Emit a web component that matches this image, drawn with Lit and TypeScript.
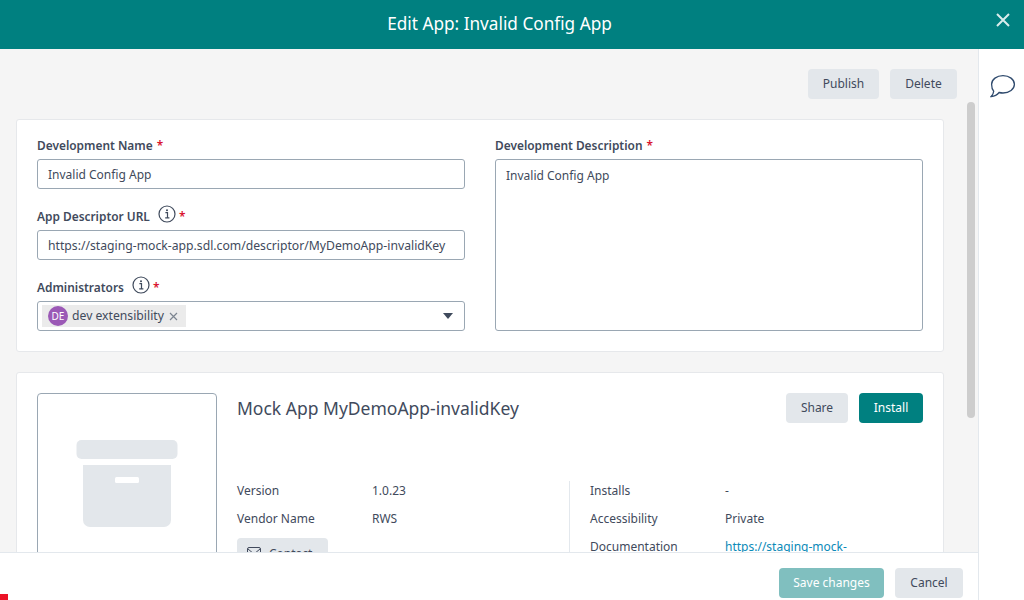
import { css, html, LitElement } from "lit";
import { customElement } from "lit/decorators.js";

const infoIcon = html`<svg class="info" viewBox="0 0 18 18" width="18" height="18">
  <circle cx="9" cy="9" r="8" fill="none" stroke="#3f4a5c" stroke-width="1.2"></circle>
  <path d="M7.4 7.6h2.1v5M7.2 12.9h4.2" fill="none" stroke="#3f4a5c" stroke-width="1.2"></path>
  <circle cx="9" cy="5.2" r="1" fill="#3f4a5c"></circle>
</svg>`;

@customElement("app-root")
export class AppRoot extends LitElement {
  static styles = css`
    :host {
      display: flex;
      flex-direction: column;
      position: relative;
      width: 1024px;
      height: 600px;
      overflow: hidden;
      background: #fff;
      color: #414a5c;
      font-family: "Noto Sans", sans-serif;
      font-size: 12px;
    }

    * {
      box-sizing: border-box;
    }

    header {
      height: 49px;
      flex: none;
      background: #008080;
      color: #fff;
      display: flex;
      align-items: center;
      justify-content: center;
      position: relative;
      font-size: 17.2px;
      padding: 0 25px 2px 0;
    }

    .close {
      position: absolute;
      right: 13px;
      top: 12px;
    }

    .body {
      flex: 1;
      min-height: 0;
      display: flex;
    }

    .main {
      width: 979px;
      flex: none;
      display: flex;
      flex-direction: column;
      border-right: 1px solid #e3e8ed;
    }

    .rail {
      flex: 1;
      padding: 25px 0 0 11px;
    }

    .scroll {
      flex: 1;
      min-height: 0;
      overflow: hidden;
      background: #f5f5f5;
      padding: 20px 21px 0 16px;
      position: relative;
    }

    .thumb {
      position: absolute;
      left: 967px;
      top: 53px;
      width: 8px;
      height: 316px;
      border-radius: 4px;
      background: #cdcdcd;
    }

    .top-actions {
      display: flex;
      justify-content: flex-end;
      gap: 11px;
      margin-bottom: 20px;
    }

    button {
      height: 30px;
      padding: 0 0 2px;
      border: none;
      border-radius: 4px;
      font: inherit;
      background: #e3e7eb;
      color: inherit;
    }

    .w62 {
      width: 62px;
    }

    .w64 {
      width: 64px;
    }

    .w67 {
      width: 67px;
    }

    .w68 {
      width: 68px;
    }

    .w71 {
      width: 71px;
    }

    .w105 {
      width: 105px;
    }

    button.primary {
      background: #008080;
      color: #fff;
    }

    button.disabled {
      background: #80bfbf;
      color: #fff;
    }

    .card {
      width: 928px;
      background: #fff;
      border: 1px solid #e6e8eb;
      border-radius: 3px;
      padding: 20px;
    }

    .form {
      height: 233px;
      margin-bottom: 20px;
      padding-top: 15px;
      display: grid;
      grid-template-columns: 428px 428px;
      column-gap: 30px;
    }

    .left {
      display: flex;
      flex-direction: column;
      gap: 17px;
    }

    .right {
      display: flex;
      flex-direction: column;
    }

    .field {
      display: flex;
      flex-direction: column;
    }

    label {
      height: 19px;
      display: flex;
      align-items: center;
      font-size: 11.9px;
      font-weight: 600;
      margin-bottom: 5px;
    }

    .info {
      margin: -3px 3px 0 8px;
    }

    .req {
      color: #d9142f;
      margin-left: 4px;
    }

    .info + .req {
      margin-left: 0;
    }

    .input {
      height: 30px;
      border: 1px solid #9aa7b3;
      border-radius: 3px;
      padding: 0 10px;
      display: flex;
      align-items: center;
      background: #fff;
    }

    .url {
      font-size: 12.2px;
    }

    .area {
      height: 172px;
      align-items: flex-start;
      padding-top: 7px;
    }

    .select {
      padding: 0 11px 0 4px;
      justify-content: space-between;
    }

    .chip {
      width: 144px;
      height: 22px;
      display: flex;
      align-items: center;
      background: #ebebeb;
      padding: 0 8px 0 6px;
      gap: 4px;
      font-size: 12.2px;
    }

    .chip-label {
      margin-top: -2px;
    }

    .avatar {
      width: 20px;
      height: 20px;
      border-radius: 50%;
      background: #9b59b6;
      color: #fff;
      font-size: 10px;
      display: flex;
      align-items: center;
      justify-content: center;
    }

    .chip-x {
      margin-left: auto;
    }

    .caret {
      width: 0;
      height: 0;
      border-left: 5px solid transparent;
      border-right: 5px solid transparent;
      border-top: 6px solid #3f4a5c;
    }

    .app {
      display: flex;
      gap: 20px;
      height: 300px;
    }

    .logo {
      width: 180px;
      height: 220px;
      flex: none;
      border: 1px solid #9aa7b3;
      border-radius: 4px;
      display: flex;
      justify-content: center;
      padding-top: 46px;
    }

    .info-col {
      flex: 1;
      display: flex;
      flex-direction: column;
    }

    .title-row {
      height: 79px;
      display: flex;
      justify-content: space-between;
    }

    h2 {
      margin: 3px 0 0;
      font-size: 17.5px;
      font-weight: 400;
    }

    .share {
      display: flex;
      gap: 11px;
    }

    .details {
      display: grid;
      grid-template-columns: 332px 1fr;
      margin-top: 4px;
    }

    .col {
      display: flex;
      flex-direction: column;
    }

    .col + .col {
      margin-top: 5px;
      border-left: 1px solid #e3e8ed;
      padding-left: 20px;
    }

    .col + .col .row:first-child {
      margin-top: -5px;
    }

    .row {
      height: 28px;
      display: flex;
      align-items: center;
    }

    .row span:first-child {
      width: 135px;
    }

    a {
      color: #0a8ab8;
    }

    .contact {
      width: 91px;
      padding: 0 10px;
      margin-top: 6px;
      display: flex;
      align-items: center;
      gap: 8px;
    }

    footer {
      height: 48px;
      flex: none;
      background: #fff;
      border-top: 1px solid #e3e8ed;
      display: flex;
      justify-content: flex-end;
      align-items: flex-end;
      gap: 11px;
      padding: 0 15px 2px 0;
      position: relative;
    }

    .mark {
      position: absolute;
      left: 0;
      bottom: 0;
      width: 8px;
      height: 6px;
      background: #ec1226;
    }
  `;

  render() {
    return html`
      <header>
        Edit App: Invalid Config App
        <svg class="close" width="16" height="16" viewBox="0 0 16 16">
          <path d="M2 2l12 12M14 2L2 14" stroke="#d9ecec" stroke-width="2" fill="none"></path>
        </svg>
      </header>
      <div class="body">
        <div class="main">
          <div class="scroll">
            <div class="top-actions">
              <button class="w71">Publish</button>
              <button class="w67">Delete</button>
            </div>
            <div class="card form">
              <div class="left">
                <div class="field">
                  <label>Development Name <span class="req">*</span></label>
                  <div class="input">Invalid Config App</div>
                </div>
                <div class="field">
                  <label>App Descriptor URL ${infoIcon}<span class="req">*</span></label>
                  <div class="input url">https://staging-mock-app.sdl.com/descriptor/MyDemoApp-invalidKey</div>
                </div>
                <div class="field">
                  <label>Administrators ${infoIcon}<span class="req">*</span></label>
                  <div class="input select">
                    <div class="chip">
                      <span class="avatar">DE</span>
                      <span class="chip-label">dev extensibility</span>
                      <svg class="chip-x" width="9" height="9" viewBox="0 0 9 9">
                        <path d="M1 1l7 7M8 1L1 8" stroke="#7c8590" stroke-width="1.2" fill="none"></path>
                      </svg>
                    </div>
                    <span class="caret"></span>
                  </div>
                </div>
              </div>
              <div class="right">
                <label>Development Description <span class="req">*</span></label>
                <div class="input area">Invalid Config App</div>
              </div>
            </div>
            <div class="card app">
              <div class="logo">
                <svg width="102" height="88" viewBox="0 0 102 88">
                  <rect x="0.5" y="0" width="101" height="19" rx="5" fill="#e3e7eb"></rect>
                  <path d="M7 25h88v55a7 7 0 0 1-7 7H14a7 7 0 0 1-7-7z" fill="#e3e7eb"></path>
                  <rect x="39" y="37" width="24" height="6" rx="1.5" fill="#fff"></rect>
                </svg>
              </div>
              <div class="info-col">
                <div class="title-row">
                  <h2>Mock App MyDemoApp-invalidKey</h2>
                  <div class="share">
                    <button class="w62">Share</button>
                    <button class="primary w64">Install</button>
                  </div>
                </div>
                <div class="details">
                  <div class="col">
                    <div class="row"><span>Version</span><span>1.0.23</span></div>
                    <div class="row"><span>Vendor Name</span><span>RWS</span></div>
                    <button class="contact">
                      <svg width="14" height="12" viewBox="0 0 14 12">
                        <rect x="0.5" y="0.5" width="13" height="11" rx="1.500" fill="none" stroke="#414a5c"></rect>
                        <path d="M1 2l6 5 6-5" fill="none" stroke="#414a5c"></path>
                      </svg>
                      Contact
                    </button>
                  </div>
                  <div class="col">
                    <div class="row"><span>Installs</span><span>-</span></div>
                    <div class="row"><span>Accessibility</span><span>Private</span></div>
                    <div class="row"><span>Documentation</span><a>https://staging-mock-</a></div>
                  </div>
                </div>
              </div>
            </div>
            <div class="thumb"></div>
          </div>
          <footer>
            <div class="mark"></div>
            <button class="disabled w105">Save changes</button>
            <button class="w68">Cancel</button>
          </footer>
        </div>
        <div class="rail">
          <svg width="26" height="24" viewBox="0 0 26 24">
            <path d="M13 1.600c6.300 0 11.400 3.800 11.400 8.700s-5.100 8.700-11.400 8.700c-1.400 0-2.700-.2-3.900-.5C7.300 20.800 4.500 22.300 1.200 22.500c1.400-1.500 2.300-3.400 2.500-5.300C2.300 15.700 1.600 13.100 1.600 10.300 1.600 5.400 6.700 1.600 13 1.600z" fill="none" stroke="#2f4a6d" stroke-width="1.300"></path>
          </svg>
        </div>
      </div>
    `;
  }
}
